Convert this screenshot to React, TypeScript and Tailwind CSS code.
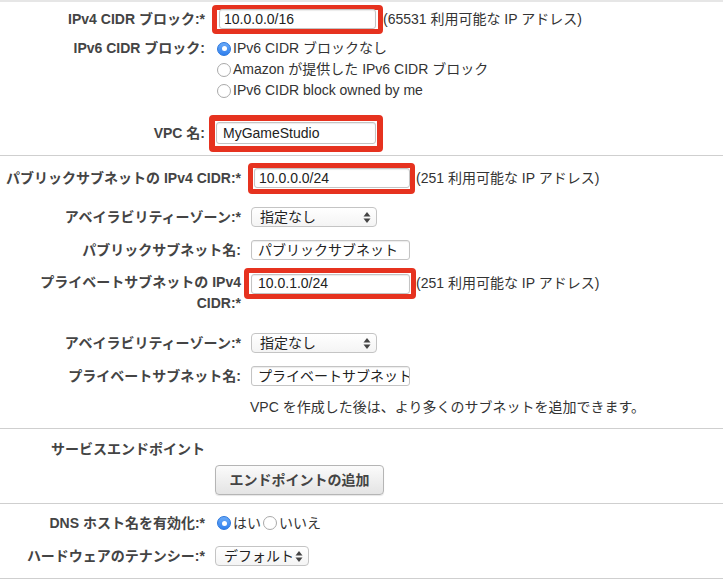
import React from 'react';

const font = { fontFamily: '"Liberation Sans", "Noto Sans CJK JP", sans-serif' };

const Label: React.FC<{ w: string; children: React.ReactNode; className?: string }> = ({ w, children, className = '' }) => (
  <div className={`${w} shrink-0 text-right font-bold text-[#444] leading-[21px] ${className}`}>{children}</div>
);

const TextBox: React.FC<{ value: string; className?: string }> = ({ value, className = '' }) => (
  <div
    className={`h-[20px] border border-[#c4c4c4] rounded-[3px] bg-white shadow-[inset_0_1px_1px_rgba(0,0,0,0.08)] flex items-center text-[#222] whitespace-nowrap overflow-hidden ${className}`}
  >
    {value}
  </div>
);

const RedBox: React.FC<{ className: string; children: React.ReactNode }> = ({ className, children }) => (
  <div className={`shrink-0 border-[5px] border-[#e6321f] rounded-[4px] flex items-center ${className}`}>{children}</div>
);

const Radio: React.FC<{ checked?: boolean }> = ({ checked }) =>
  checked ? (
    <span className="w-[14px] h-[14px] rounded-full bg-gradient-to-b from-[#6aaaf8] to-[#2f80ee] border border-[#2a76dc] flex items-center justify-center shrink-0">
      <span className="w-[5px] h-[5px] rounded-full bg-white" />
    </span>
  ) : (
    <span className="w-[14px] h-[14px] rounded-full bg-white border border-[#a9a9a9] shrink-0" />
  );

const Arrows = () => (
  <svg width="8" height="13" viewBox="0 0 8 13" className="shrink-0">
    <path d="M4 1 L7.5 5.5 H0.5 Z" fill="#444" />
    <path d="M4 12 L7.5 7.5 H0.5 Z" fill="#444" />
  </svg>
);

const Select: React.FC<{ value: string; className?: string }> = ({ value, className = '' }) => (
  <div
    className={`h-[20px] border border-[#c4c4c4] rounded-[4px] bg-gradient-to-b from-white to-[#f4f4f4] flex items-center justify-between pl-[8px] pr-[5px] text-[#222] whitespace-nowrap ${className}`}
  >
    <span>{value}</span>
    <Arrows />
  </div>
);

const App: React.FC = () => {
  return (
    <div style={font} className="w-[723px] h-[588px] bg-white text-[14px] text-[#333] border-t-2 border-[#e6e6e6] overflow-hidden">
      {/* VPC */}
      <div className="pb-[2px] border-b border-[#cfcfcf]">
        <div className="h-[34px] flex items-center">
          <Label w="w-[205px]">IPv4 CIDR ブロック:*</Label>
          <RedBox className="ml-[7px] w-[171px] h-[29px] pl-[2px]">
            <TextBox value="10.0.0.0/16" className="w-[157px] h-[19px] pl-[4px]" />
          </RedBox>
          <span className="whitespace-nowrap">(65531 利用可能な IP アドレス)</span>
        </div>
        <div className="mt-[2px] flex">
          <Label w="w-[205px]">IPv6 CIDR ブロック:</Label>
          <div className="ml-[12px] flex flex-col">
            <div className="h-[21px] flex items-center gap-[2px]"><Radio checked /><span>IPv6 CIDR ブロックなし</span></div>
            <div className="h-[21px] flex items-center gap-[2px]"><Radio /><span>Amazon が提供した IPv6 CIDR ブロック</span></div>
            <div className="h-[21px] flex items-center gap-[2px]"><Radio /><span>IPv6 CIDR block owned by me</span></div>
          </div>
        </div>
        <div className="mt-[12px] h-[40px] flex items-center">
          <Label w="w-[205px]">VPC 名:</Label>
          <RedBox className="ml-[4px] w-[174px] h-[37px] border-[6px] pl-[1px]">
            <TextBox value="MyGameStudio" className="w-[160px] h-[22px] pl-[6px]" />
          </RedBox>
        </div>
      </div>

      {/* Subnets */}
      <div className="pt-[4px] pb-[6px] border-b border-[#cfcfcf]">
        <div className="h-[36px] flex items-center">
          <Label w="w-[241px]">パブリックサブネットの IPv4 CIDR:*</Label>
          <RedBox className="ml-[7px] w-[167px] h-[31px] pl-[1px]">
            <TextBox value="10.0.0.0/24" className="w-[156px] h-[20px] pl-[4px]" />
          </RedBox>
          <span className="ml-[1px] whitespace-nowrap">(251 利用可能な IP アドレス)</span>
        </div>
        <div className="mt-[4px] h-[34px] flex items-center">
          <Label w="w-[241px]">アベイラビリティーゾーン:*</Label>
          <Select value="指定なし" className="ml-[10px] w-[126px]" />
        </div>
        <div className="h-[32px] flex items-center">
          <Label w="w-[241px]">パブリックサブネット名:</Label>
          <TextBox value="パブリックサブネット" className="ml-[10px] w-[159px] pl-[6px]" />
        </div>
        <div className="h-[60px] flex items-start">
          <Label w="w-[241px]" className="mt-[6px]">
            プライベートサブネットの IPv4
            <br />
            CIDR:*
          </Label>
          <RedBox className="mt-[2px] ml-[3px] w-[172px] h-[31px] pl-[2px]">
            <TextBox value="10.0.1.0/24" className="w-[159px] h-[20px] pl-[6px]" />
          </RedBox>
          <span className="mt-[7px] whitespace-nowrap">(251 利用可能な IP アドレス)</span>
        </div>
        <div className="h-[34px] flex items-center">
          <Label w="w-[241px]">アベイラビリティーゾーン:*</Label>
          <Select value="指定なし" className="ml-[10px] w-[126px]" />
        </div>
        <div className="h-[32px] flex items-center">
          <Label w="w-[241px]">プライベートサブネット名:</Label>
          <TextBox value="プライベートサブネット" className="ml-[10px] w-[159px] pl-[6px]" />
        </div>
        <div className="h-[30px] flex items-center pl-[250px] whitespace-nowrap">
          VPC を作成した後は、より多くのサブネットを追加できます。
        </div>
      </div>

      {/* Endpoints */}
      <div className="pt-[4px] pb-[8px] border-b border-[#cfcfcf]">
        <div className="h-[32px] flex items-center">
          <Label w="w-[205px]">サービスエンドポイント</Label>
        </div>
        <div className="pl-[215px]">
          <button className="w-[169px] h-[30px] border border-[#b5b5b5] rounded-[4px] bg-gradient-to-b from-[#fbfbfb] to-[#e4e4e4] shadow-[0_1px_1px_rgba(0,0,0,0.1)] font-bold text-[#444]">
            エンドポイントの追加
          </button>
        </div>
      </div>

      {/* DNS */}
      <div className="pt-[2px] pb-[6px] border-b border-[#cfcfcf]">
        <div className="h-[34px] flex items-center">
          <Label w="w-[205px]">DNS ホスト名を有効化:*</Label>
          <div className="ml-[12px] flex items-center gap-[2px]">
            <Radio checked /><span>はい</span>
            <Radio /><span>いいえ</span>
          </div>
        </div>
        <div className="h-[32px] flex items-center">
          <Label w="w-[205px]">ハードウェアのテナンシー:*</Label>
          <Select value="デフォルト" className="ml-[10px] w-[94px]" />
        </div>
      </div>
    </div>
  );
};

export default App;
